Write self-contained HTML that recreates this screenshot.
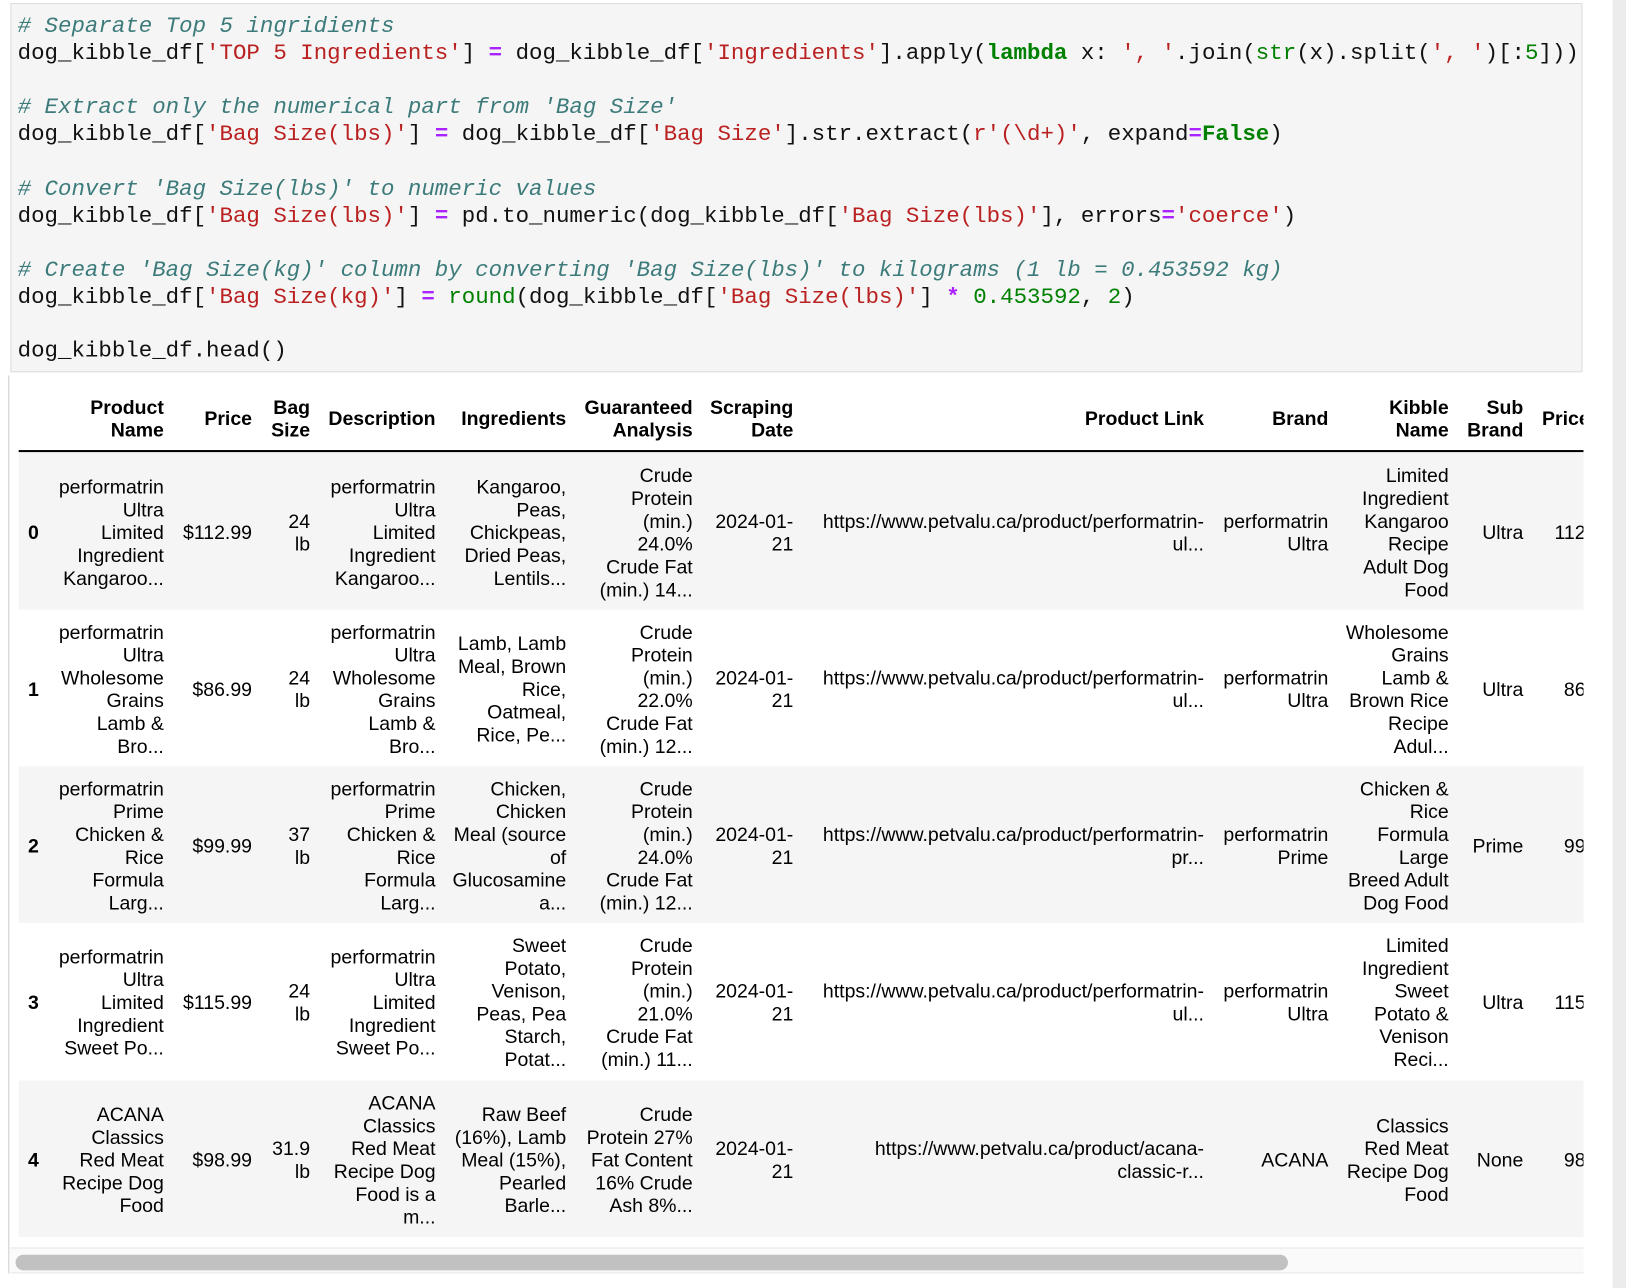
<!DOCTYPE html>
<html><head><meta charset="utf-8"><style>
html,body{margin:0;padding:0;background:#fff;width:1626px;height:1288px;overflow:hidden}
#w{position:absolute;left:0;top:0;width:1568px;height:1242px;transform:scale(1.03699);transform-origin:0 0}
.code{position:absolute;left:10px;top:3px;width:1516px;height:356px;background:#f5f5f5;border:1px solid #dcdcdc;box-sizing:border-box}
pre{position:absolute;left:6px;top:9px;margin:0;font-family:"Liberation Mono",monospace;font-size:21.63px;line-height:26.1px;color:#111}
.c{color:#3d7b7b;font-style:italic}.s{color:#ba2121}.o{color:#a2f;font-weight:bold}.k{color:#008000;font-weight:bold}.b{color:#008000}.n{color:#008000}
.vl{position:absolute;left:8px;top:362px;width:1px;height:866px;background:#ccc}
.rs{position:absolute;left:1555px;top:0;width:13px;height:1242px;background:#ececec}
.hl{position:absolute;left:18px;top:434px;width:1509px;height:2px;background:#000}
.row{position:absolute;left:18px;width:1509px;height:151px}
.g{background:#f5f5f5}
.cell{position:absolute;display:flex;align-items:center;justify-content:flex-end;text-align:right;white-space:nowrap;font-family:"Liberation Sans",Arial,sans-serif;font-size:18.8px;line-height:22px;color:#000}
.h{font-weight:bold}
.sb{position:absolute;left:10px;top:1203px;width:1517px;height:25px;background:#fafafa;border-top:1px solid #e6e6e6;border-bottom:1px solid #e6e6e6;box-sizing:border-box}
.th{position:absolute;left:15px;top:1210px;width:1227px;height:15px;background:#c1c1c1;border-radius:8px}
.clip{position:absolute;left:0;top:362px;width:1527px;height:840px;overflow:hidden}
</style></head><body><div id="w">
<div class="code"><pre><span class="c"># Separate Top 5 ingridients</span>
dog_kibble_df[<span class="s">'TOP 5 Ingredients'</span>] <span class="o">=</span> dog_kibble_df[<span class="s">'Ingredients'</span>].apply(<span class="k">lambda</span> x: <span class="s">', '</span>.join(<span class="b">str</span>(x).split(<span class="s">', '</span>)[:<span class="n">5</span>]))

<span class="c"># Extract only the numerical part from 'Bag Size'</span>
dog_kibble_df[<span class="s">'Bag Size(lbs)'</span>] <span class="o">=</span> dog_kibble_df[<span class="s">'Bag Size'</span>].str.extract(<span class="s">r'(\d+)'</span>, expand<span class="o">=</span><span class="k">False</span>)

<span class="c"># Convert 'Bag Size(lbs)' to numeric values</span>
dog_kibble_df[<span class="s">'Bag Size(lbs)'</span>] <span class="o">=</span> pd.to_numeric(dog_kibble_df[<span class="s">'Bag Size(lbs)'</span>], errors<span class="o">=</span><span class="s">'coerce'</span>)

<span class="c"># Create 'Bag Size(kg)' column by converting 'Bag Size(lbs)' to kilograms (1 lb = 0.453592 kg)</span>
dog_kibble_df[<span class="s">'Bag Size(kg)'</span>] <span class="o">=</span> <span class="b">round</span>(dog_kibble_df[<span class="s">'Bag Size(lbs)'</span>] <span class="o">*</span> <span class="n">0.453592</span>, <span class="n">2</span>)

dog_kibble_df.head()</pre></div>
<div class="vl"></div>
<div class="rs"></div>
<div class="row g" style="top:437px"></div>
<div class="row" style="top:588px"></div>
<div class="row g" style="top:739px"></div>
<div class="row" style="top:890px"></div>
<div class="row g" style="top:1042px"></div>
<div class="hl"></div>
<div class="sb"></div><div class="th"></div>
<div class="clip" id="clip"></div>
<script>
var cols=[[27,44,'l'],[45,158],[165,243],[255,299],[305,420],[428,546],[556,668],[676,765],[770,1161],[1166,1281],[1286,1397],[1402,1469],[1480,1529]];
var head=['','Product<br>Name','Price','Bag<br>Size','Description','Ingredients','Guaranteed<br>Analysis','Scraping<br>Date','Product Link','Brand','Kibble<br>Name','Sub<br>Brand',''];
var rows=[
['0','performatrin<br>Ultra<br>Limited<br>Ingredient<br>Kangaroo...','$112.99','24<br>lb','performatrin<br>Ultra<br>Limited<br>Ingredient<br>Kangaroo...','Kangaroo,<br>Peas,<br>Chickpeas,<br>Dried Peas,<br>Lentils...','Crude<br>Protein<br>(min.)<br>24.0%<br>Crude Fat<br>(min.) 14...','2024-01-<br>21','https://www.petvalu.ca/product/performatrin-<br>ul...','performatrin<br>Ultra','Limited<br>Ingredient<br>Kangaroo<br>Recipe<br>Adult Dog<br>Food','Ultra','112'],
['1','performatrin<br>Ultra<br>Wholesome<br>Grains<br>Lamb &amp;<br>Bro...','$86.99','24<br>lb','performatrin<br>Ultra<br>Wholesome<br>Grains<br>Lamb &amp;<br>Bro...','Lamb, Lamb<br>Meal, Brown<br>Rice,<br>Oatmeal,<br>Rice, Pe...','Crude<br>Protein<br>(min.)<br>22.0%<br>Crude Fat<br>(min.) 12...','2024-01-<br>21','https://www.petvalu.ca/product/performatrin-<br>ul...','performatrin<br>Ultra','Wholesome<br>Grains<br>Lamb &amp;<br>Brown Rice<br>Recipe<br>Adul...','Ultra','86'],
['2','performatrin<br>Prime<br>Chicken &amp;<br>Rice<br>Formula<br>Larg...','$99.99','37<br>lb','performatrin<br>Prime<br>Chicken &amp;<br>Rice<br>Formula<br>Larg...','Chicken,<br>Chicken<br>Meal (source<br>of<br>Glucosamine<br>a...','Crude<br>Protein<br>(min.)<br>24.0%<br>Crude Fat<br>(min.) 12...','2024-01-<br>21','https://www.petvalu.ca/product/performatrin-<br>pr...','performatrin<br>Prime','Chicken &amp;<br>Rice<br>Formula<br>Large<br>Breed Adult<br>Dog Food','Prime','99'],
['3','performatrin<br>Ultra<br>Limited<br>Ingredient<br>Sweet Po...','$115.99','24<br>lb','performatrin<br>Ultra<br>Limited<br>Ingredient<br>Sweet Po...','Sweet<br>Potato,<br>Venison,<br>Peas, Pea<br>Starch,<br>Potat...','Crude<br>Protein<br>(min.)<br>21.0%<br>Crude Fat<br>(min.) 11...','2024-01-<br>21','https://www.petvalu.ca/product/performatrin-<br>ul...','performatrin<br>Ultra','Limited<br>Ingredient<br>Sweet<br>Potato &amp;<br>Venison<br>Reci...','Ultra','115'],
['4','ACANA<br>Classics<br>Red Meat<br>Recipe Dog<br>Food','$98.99','31.9<br>lb','ACANA<br>Classics<br>Red Meat<br>Recipe Dog<br>Food is a<br>m...','Raw Beef<br>(16%), Lamb<br>Meal (15%),<br>Pearled<br>Barle...','Crude<br>Protein 27%<br>Fat Content<br>16% Crude<br>Ash 8%...','2024-01-<br>21','https://www.petvalu.ca/product/acana-<br>classic-r...','ACANA','Classics<br>Red Meat<br>Recipe Dog<br>Food','None','98']];
var out='';
function cell(top,h,c,txt,bold){var a=cols[c];var jc=a[2]=='l'?'flex-start':'flex-end';var ta=a[2]=='l'?'left':'right';
return '<div class="cell'+(bold?' h':'')+'" style="left:'+a[0]+'px;width:'+(a[1]-a[0])+'px;top:'+top+'px;height:'+h+'px;justify-content:'+jc+';text-align:'+ta+'"><div>'+txt+'</div></div>';}
for(var c=0;c<13;c++)out+=cell(370-362,68,c,head[c],true);
out+='<div class="cell h" style="left:1487px;width:100px;top:8px;height:68px;justify-content:flex-start">Price</div>';
var tops=[437,588,739,890,1042];
for(var r=0;r<5;r++)for(var c=0;c<13;c++)out+=cell(tops[r]-362+1,151,c,rows[r][c],c==0);
document.getElementById('clip').innerHTML=out;
</script>
</div></body></html>
